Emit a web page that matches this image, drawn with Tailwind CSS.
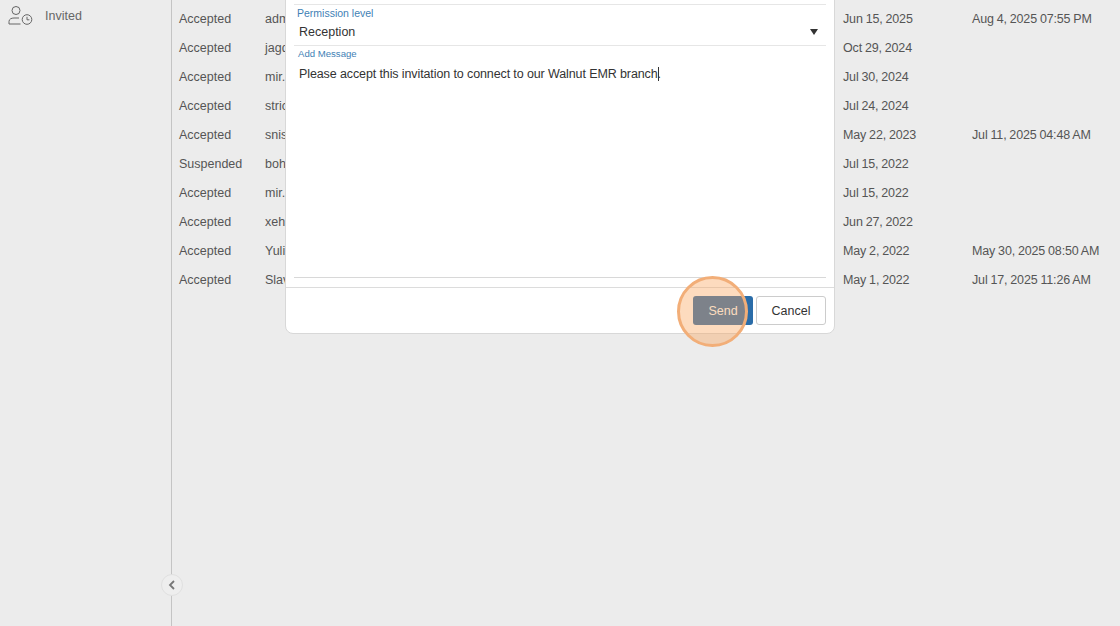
<!DOCTYPE html>
<html lang="en">
<head>
    <meta charset="UTF-8">
    <title>Invited users</title>
    <script src="https://cdn.jsdelivr.net/npm/@tailwindcss/browser@4"></script>
</head>
<body class="bg-[#ececec] text-[#555] font-['Liberation_Sans',Arial,sans-serif] overflow-hidden">

<div class="relative flex w-[1120px] h-[626px] overflow-hidden">
    <!-- Sidebar -->
    <aside class="relative w-[172px] h-full shrink-0 border-r border-[#c4c4c4]">
        <div class="flex items-center pl-[8px] pt-[3px] h-[29px] gap-[12px]">
            <svg class="w-[25px] h-[22px] text-[#666]" viewBox="0 0 25 22" fill="none" stroke="currentColor" stroke-width="1">
                <circle cx="8" cy="5.5" r="4"/>
                <path d="M1 19v-2.5c0-2.5 2.5-3.5 5-3.5h5"/>
                <path d="M1 19h11.5"/>
                <circle cx="19" cy="14.5" r="4.8"/>
                <path d="M19 11.8v3h2.4"/>
            </svg>
            <span class="text-[12.5px] text-[#666]">Invited</span>
        </div>
        <button class="absolute right-[-12px] top-[574px] w-[22px] h-[22px] rounded-full bg-[#eeeeee] border border-[#e0e0e0] flex items-center justify-center">
            <svg class="w-[8px] h-[10px]" viewBox="0 0 8 10" fill="none" stroke="#777" stroke-width="1.8"><path d="M6 1 2 5l4 4"/></svg>
        </button>
    </aside>

    <!-- Table -->
    <main class="flex-1 pt-[5px] text-[12.5px] [&_span:nth-child(n+3)]:tracking-[-0.15px] [&_span:nth-child(n+3)]:[word-spacing:-0.4px]">
        <div class="flex h-[29px] items-center"><span class="w-[93px] pl-[7px]">Accepted</span><span class="w-[578px]">admin</span><span class="w-[129px]">Jun 15, 2025</span><span>Aug 4, 2025 07:55 PM</span></div>
        <div class="flex h-[29px] items-center"><span class="w-[93px] pl-[7px]">Accepted</span><span class="w-[578px]">jagdish</span><span class="w-[129px]">Oct 29, 2024</span></div>
        <div class="flex h-[29px] items-center"><span class="w-[93px] pl-[7px]">Accepted</span><span class="w-[578px]">mir.a</span><span class="w-[129px]">Jul 30, 2024</span></div>
        <div class="flex h-[29px] items-center"><span class="w-[93px] pl-[7px]">Accepted</span><span class="w-[578px]">strick</span><span class="w-[129px]">Jul 24, 2024</span></div>
        <div class="flex h-[29px] items-center"><span class="w-[93px] pl-[7px]">Accepted</span><span class="w-[578px]">snis</span><span class="w-[129px]">May 22, 2023</span><span>Jul 11, 2025 04:48 AM</span></div>
        <div class="flex h-[29px] items-center"><span class="w-[93px] pl-[7px]">Suspended</span><span class="w-[578px]">bohr</span><span class="w-[129px]">Jul 15, 2022</span></div>
        <div class="flex h-[29px] items-center"><span class="w-[93px] pl-[7px]">Accepted</span><span class="w-[578px]">mir.b</span><span class="w-[129px]">Jul 15, 2022</span></div>
        <div class="flex h-[29px] items-center"><span class="w-[93px] pl-[7px]">Accepted</span><span class="w-[578px]">xeh</span><span class="w-[129px]">Jun 27, 2022</span></div>
        <div class="flex h-[29px] items-center"><span class="w-[93px] pl-[7px]">Accepted</span><span class="w-[578px]">Yuli</span><span class="w-[129px]">May 2, 2022</span><span>May 30, 2025 08:50 AM</span></div>
        <div class="flex h-[29px] items-center"><span class="w-[93px] pl-[7px]">Accepted</span><span class="w-[578px]">Slava</span><span class="w-[129px]">May 1, 2022</span><span>Jul 17, 2025 11:26 AM</span></div>
    </main>

    <!-- Invite modal -->
    <div class="absolute left-[285px] top-[-10px] w-[550px] h-[344px] bg-white rounded-b-[8px] border border-[#d8d8d8] flex flex-col">
        <div class="flex-1 pl-[8px] pr-[8px] pt-[13px] flex flex-col">
            <div class="border-t border-[#e6e6e6] pt-[2px] pl-[3px] text-[10.5px] leading-[12px] h-[15px] text-[#3f7fb5]">Permission level</div>
            <div class="flex items-center justify-between h-[27px] pl-[5px] pr-[8px] text-[12.5px] text-[#333] border-b border-[#e6e6e6]">
                <span>Reception</span>
                <span class="w-0 h-0 border-x-[4px] border-x-transparent border-t-[6px] border-t-[#333]"></span>
            </div>
            <div class="pt-[2px] pb-[1px] pl-[4px] text-[9.6px] leading-[12px] text-[#3f7fb5]">Add Message</div>
            <div class="pl-[5px] pt-[5px] text-[12.5px] leading-[16px] text-[#333] h-[217px] border-b border-[#d8d8d8] tracking-[-0.11px]">Please accept this invitation to connect to our Walnut EMR branch<span class="border-r border-[#333] mr-[-1px]"></span>.</div>
        </div>
        <div class="h-[46px] border-t border-[#dcdcdc] flex items-center justify-end gap-[3px] pr-[8px]">
            <button class="w-[60px] h-[29px] rounded-[3px] bg-[#2a6ca8] text-white text-[12.5px] pt-[1px]">Send</button>
            <button class="w-[70px] h-[29px] rounded-[3px] bg-white border border-[#cccccc] text-[#333] text-[12.5px] pt-[1px]">Cancel</button>
        </div>
    </div>

    <!-- Click highlight -->
    <div class="absolute left-[677px] top-[276px] w-[71px] h-[71px] rounded-full bg-[#f9a45c]/40 border-[3px] border-[#f2ae78]"></div>
</div>

</body>
</html>
